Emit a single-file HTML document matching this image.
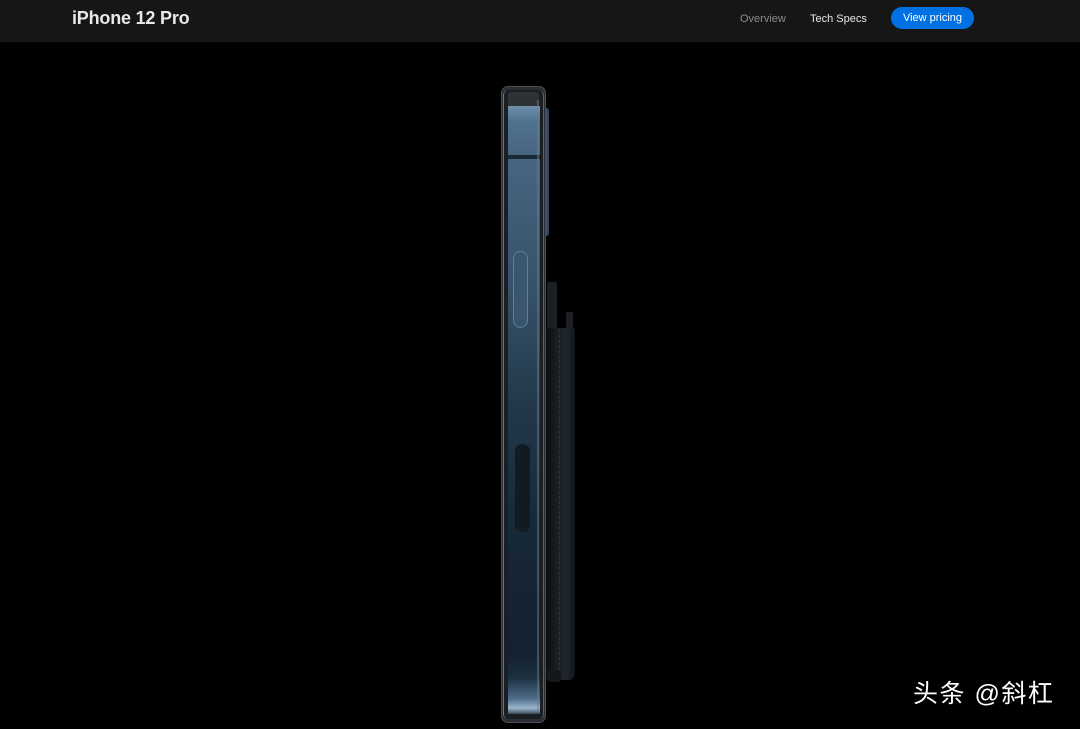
<!DOCTYPE html>
<html><head><meta charset="utf-8"><style>
body{margin:0;width:1080px;height:729px;background:#000;overflow:hidden;position:relative;font-family:"Liberation Sans",sans-serif}
.hdr{position:absolute;left:0;top:0;width:1080px;height:42px;background:#161616}
.t{position:absolute;left:72px;top:8px;color:#e8e8e8;font-size:18px;font-weight:bold;letter-spacing:-0.2px}
.n{position:absolute;top:13px;font-size:11px}
.btn{position:absolute;left:891px;top:7px;width:83px;height:22px;border-radius:11px;background:#0071e3;color:#fff;font-size:11px;text-align:center;line-height:23px}
.a{position:absolute}
.wm{position:absolute;left:913px;top:674px;color:#fff;font-size:25px;letter-spacing:1.5px;font-family:"Liberation Sans","Noto Sans CJK SC",sans-serif}
</style></head><body>
<div class="hdr"><div class="t">iPhone 12 Pro</div>
<div class="n" style="left:740px;color:#8a8a8a">Overview</div>
<div class="n" style="left:810px;color:#e8e8e8">Tech Specs</div>
<div class="btn">View pricing</div></div>

<!-- wallet -->
<div class="a" style="left:547px;top:282px;width:10px;height:60px;background:#1c2024;border-radius:2px"></div>
<div class="a" style="left:566px;top:312px;width:7px;height:30px;background:#1c2024;border-radius:2px"></div>
<div class="a" style="left:546px;top:328px;width:29px;height:352px;background:linear-gradient(90deg,#0c0e10,#1a1f24 40%,#1e262d 70%,#121518);border-radius:0 2px 6px 2px"></div>
<div class="a" style="left:559px;top:330px;width:1px;height:340px;border-left:1px dashed #2a3640"></div>
<div class="a" style="left:547px;top:670px;width:14px;height:12px;background:#15181b;border-radius:0 0 4px 4px"></div>

<!-- camera bump -->
<div class="a" style="left:538px;top:108px;width:11px;height:128px;background:linear-gradient(90deg,#2a3d4f,#4f6b83,#2d3e4e);border-radius:3px"></div>

<!-- phone frame -->
<div class="a" style="left:501px;top:86px;width:45px;height:637px;border-radius:7px;background:#2a2d31;border:1px solid #4a4f55;box-sizing:border-box"></div>
<div class="a" style="left:503px;top:90px;width:41px;height:629px;border-radius:5px;background:#1b1f24;border-left:1px solid #6d7680;border-right:1px solid #5a636c;box-sizing:border-box"></div>
<div class="a" style="left:508px;top:92px;width:31px;height:14px;background:#2f3234;border-radius:3px 3px 0 0"></div>
<div class="a" style="left:508px;top:106px;width:32px;height:50px;background:linear-gradient(180deg,#6f90ac,#52738f 30%,#456481);"></div>
<div class="a" style="left:508px;top:155px;width:32px;height:4px;background:#1c2833"></div>
<div class="a" style="left:508px;top:159px;width:32px;height:495px;background:linear-gradient(180deg,#466580 0%,#37536b 25%,#223849 50%,#172838 75%,#132130 100%)"></div>
<div class="a" style="left:508px;top:654px;width:32px;height:60px;background:linear-gradient(180deg,#132130,#1d3040 40%,#4e6f8c 75%,#9cb6cc 90%,#3a4a58)"></div>
<div class="a" style="left:537px;top:100px;width:2px;height:610px;background:#6a7d8e;opacity:.5"></div>
<!-- buttons -->
<div class="a" style="left:513px;top:251px;width:15px;height:77px;border:1px solid #5f7f9a;border-radius:8px;box-sizing:border-box;background:#3a566f"></div>
<div class="a" style="left:515px;top:444px;width:15px;height:88px;border-radius:7px;background:#111b24"></div>

<div class="wm">头条 @斜杠</div>
</body></html>
